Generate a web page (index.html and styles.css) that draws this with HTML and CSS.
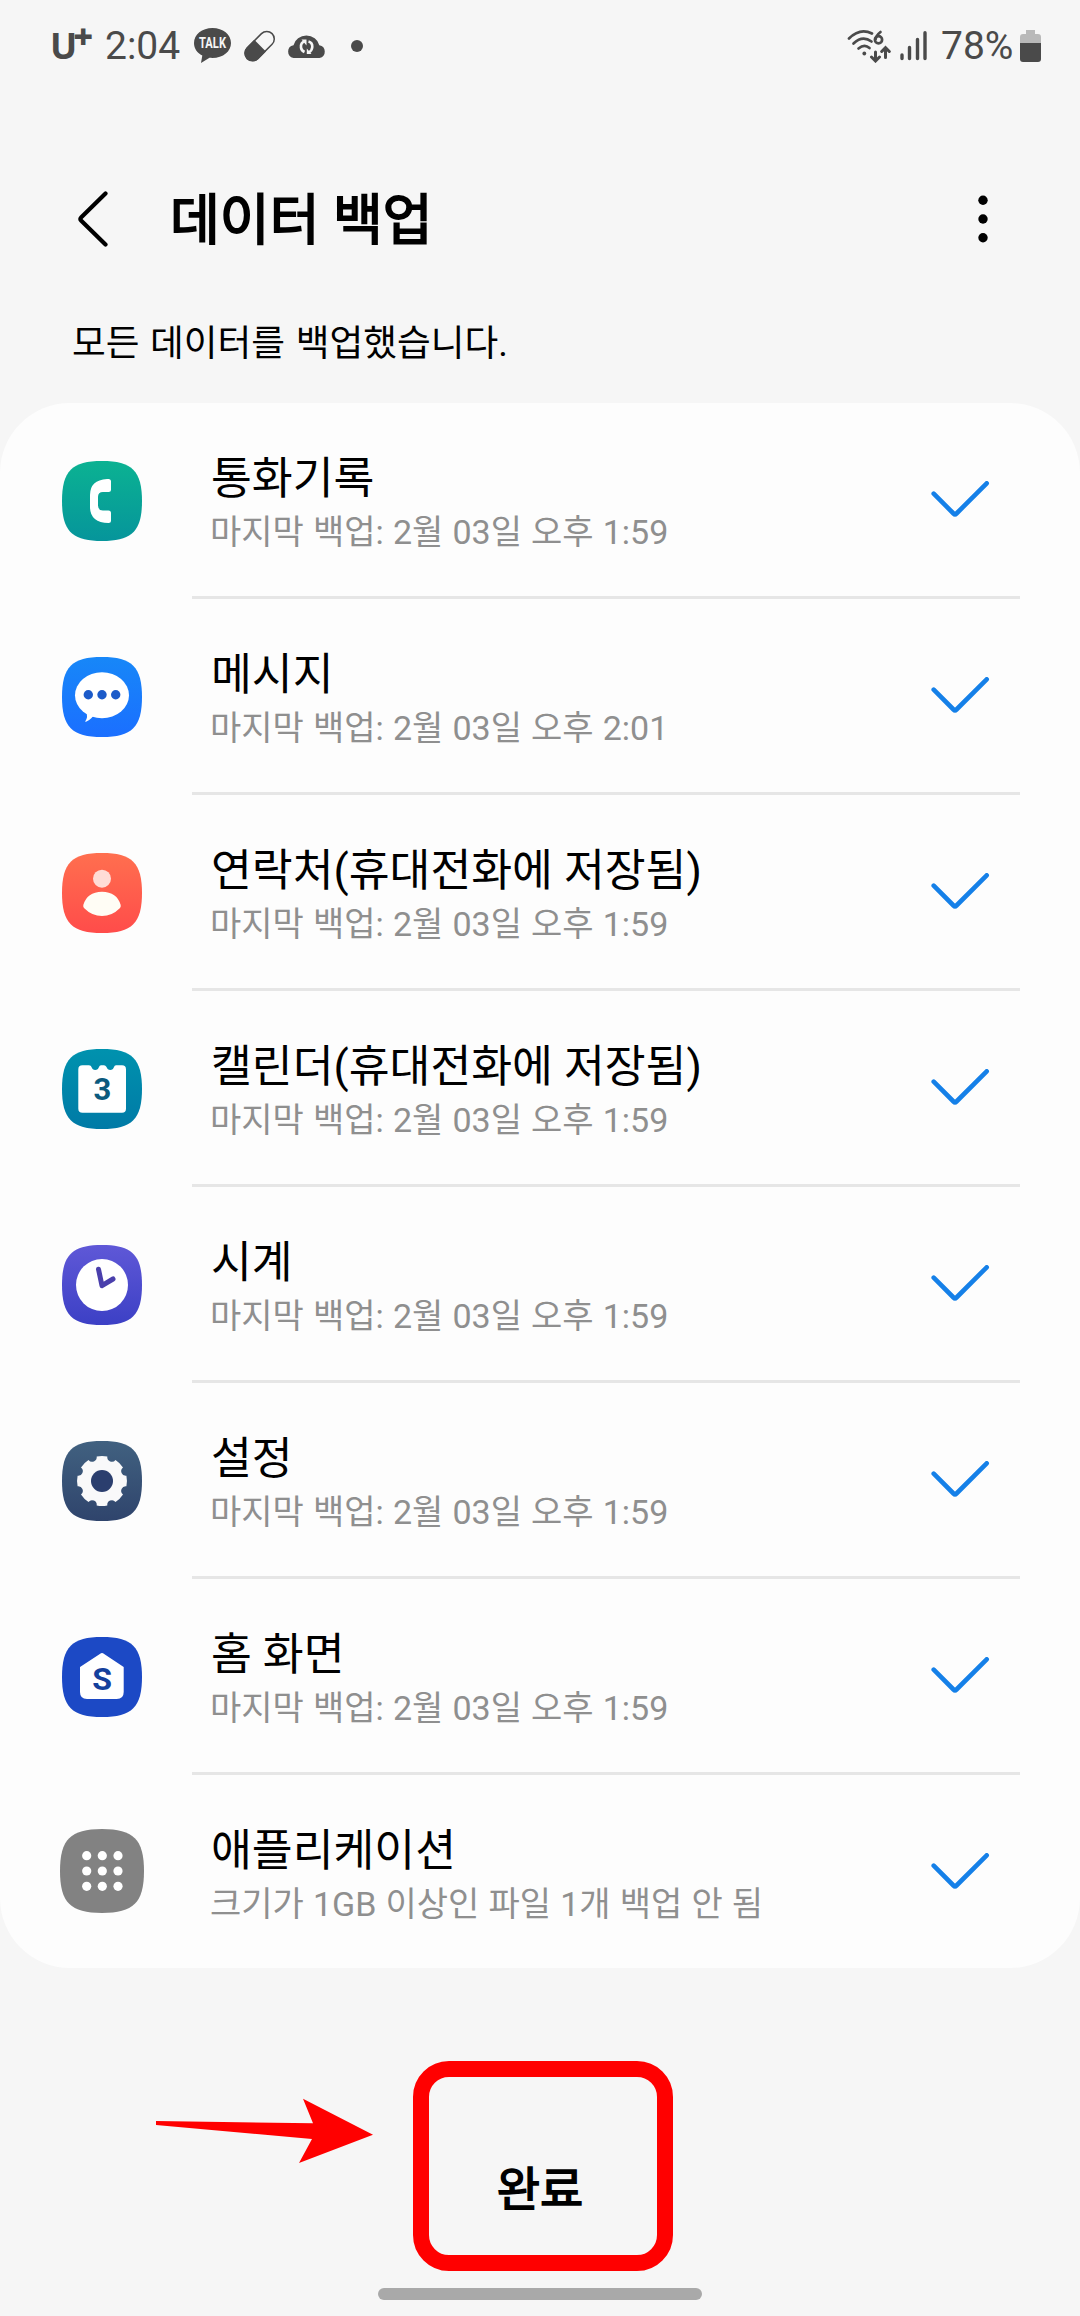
FILE: index.html
```html
<!DOCTYPE html>
<html lang="ko">
<head>
  <meta charset="UTF-8">
  <title>데이터 백업</title>
  <link rel="stylesheet" href="styles.css">
</head>
<body>
  <svg class="defs" width="0" height="0">
    <defs>
      <linearGradient id="g-call" x1="0" y1="0" x2="0" y2="1"><stop offset="0" stop-color="#0bb292"/><stop offset="1" stop-color="#06959b"/></linearGradient>
      <linearGradient id="g-msg" x1="0" y1="0" x2="0" y2="1"><stop offset="0" stop-color="#1787f8"/><stop offset="1" stop-color="#1b6fff"/></linearGradient>
      <linearGradient id="g-contact" x1="0" y1="0" x2="0" y2="1"><stop offset="0" stop-color="#ff6f4f"/><stop offset="1" stop-color="#ff4c4a"/></linearGradient>
      <linearGradient id="g-cal" x1="0" y1="0" x2="0" y2="1"><stop offset="0" stop-color="#0092ae"/><stop offset="1" stop-color="#007aa6"/></linearGradient>
      <linearGradient id="g-clock" x1="0" y1="0" x2="0" y2="1"><stop offset="0" stop-color="#5f58d7"/><stop offset="1" stop-color="#3c40c5"/></linearGradient>
      <linearGradient id="g-set" x1="0" y1="0" x2="0" y2="1"><stop offset="0" stop-color="#416180"/><stop offset="1" stop-color="#2f446c"/></linearGradient>
      <path id="squircle" d="M40 0C70 0 80 10 80 40S70 80 40 80 0 70 0 40 10 0 40 0Z"/>
      <path id="check" d="M2.7 12.7L22.5 32.5Q24 34 25.5 32.5L55.7 2.3" fill="none" stroke="#1580e8" stroke-width="4.6" stroke-linecap="round"/>
    </defs>
  </svg>

  <div class="status-bar">
    <div class="status-left">
      <span class="carrier">U<span class="plus">+</span></span>
      <span class="time">2:04</span>
      <svg class="ic-talk" width="38" height="36" viewBox="194 29 38 36">
        <path d="M212.500 29C202 29 194 35.500 194 44C194 49.500 197.300 54 202.300 56.600L201 64L209.500 58.800C222 60 231 53 231 44C231 35.500 223 29 212.500 29Z" fill="#4a4a4a"/>
        <text x="199" y="49.200" textLength="27" lengthAdjust="spacingAndGlyphs" class="talk-text">TALK</text>
      </svg>
      <svg class="ic-pill" width="34" height="34" viewBox="243 29 34 34">
        <g transform="rotate(45 259.700 46)">
          <rect x="252.200" y="28.500" width="15" height="35" rx="7.500" fill="none" stroke="#4a4a4a" stroke-width="1.500"/>
          <path d="M251.500 45.500H268V56.300A8.200 8.200 0 0 1 251.500 56.300Z" fill="#4a4a4a"/>
        </g>
      </svg>
      <svg class="ic-cloud" width="40" height="26" viewBox="287 34 40 26">
        <path d="M293.500 59A6.500 6.500 0 0 1 293.500 46.200A13.200 12.200 0 0 1 319.300 46.200A6.500 6.500 0 0 1 319.500 59Z" fill="#4a4a4a"/>
        <g fill="none" stroke="#f6f6f6" stroke-width="2.600">
          <path d="M304.500 42.500Q300.500 43.500 301 48.500Q301.300 51.500 304.500 53"/>
          <path d="M308.500 42.500Q312.500 43.500 312.300 48Q312 52 308.500 53.500"/>
        </g>
        <path d="M301.500 40.500H306.500V46.500ZM311.500 55H306.800V49.500Z" fill="#f6f6f6"/>
      </svg>
      <span class="dot"></span>
    </div>
    <div class="status-right">
      <svg class="ic-wifi" width="44" height="34" viewBox="847 29 44 34">
        <g fill="none" stroke="#4a4a4a" stroke-width="2.700" stroke-linecap="round">
          <path d="M849 38.500Q860 27.500 872 33.500"/>
          <path d="M853.500 43.500Q862.500 35 871.500 41.500"/>
          <path d="M858.500 48.500Q864.500 43.500 869.500 48"/>
          <path d="M880.500 32Q876 35.500 875.700 39"/>
          <circle cx="878.500" cy="39.800" r="3.600"/>
          <path d="M875.500 52V60M871.500 57L875.500 61L879.500 57" stroke-width="3"/>
          <path d="M885.500 57.500V49M881.700 51.500L885.500 47.700L889.300 51.500" stroke-width="3"/>
        </g>
        <circle cx="864.300" cy="53.500" r="1.900" fill="#4a4a4a"/>
      </svg>
      <svg class="ic-signal" width="28" height="30" viewBox="900 31 28 30">
        <path d="M902 55V58.500M909.500 47.500V58.500M917.500 39.500V58.500M925 32.800V58.500" stroke="#4a4a4a" stroke-width="3.400" stroke-linecap="round"/>
      </svg>
      <span class="battery-text">78%</span>
      <svg class="ic-battery" width="22" height="32" viewBox="1020 30 22 32">
        <path d="M1026 30H1035V34H1038Q1041 34 1041 37V44H1020V37Q1020 34 1023 34H1026Z" fill="#b9b9b9"/>
        <path d="M1020 43H1041V59Q1041 62 1038 62H1023Q1020 62 1020 59Z" fill="#4a4a4a"/>
      </svg>
    </div>
  </div>

  <div class="header">
    <svg class="back" width="32" height="58" viewBox="77 190 32 58">
      <path d="M105.500 193.500L81.300 217.200Q79.500 219 81.300 220.800L105.500 244.500" fill="none" stroke="#000" stroke-width="4.200" stroke-linecap="round"/>
    </svg>
    <h1>데이터 백업</h1>
    <svg class="more" width="10" height="48" viewBox="978 195 10 48">
      <circle cx="983" cy="200.300" r="4.700"/><circle cx="983" cy="219" r="4.700"/><circle cx="983" cy="237.700" r="4.700"/>
    </svg>
  </div>
  <p class="summary">모든 데이터를 백업했습니다.</p>

  <div class="list">
    <div class="item">
      <svg class="app-icon" viewBox="0 0 80 80">
        <use href="#squircle" fill="url(#g-call)"/>
        <path d="M45 18H46.500Q49 18 49 20.500V28.500Q49 31 46.500 31H41Q36 31 36 36V44.500Q36 49.500 41 49.500H46.500Q49 49.500 49 52V59.500Q49 62 46.500 62Q28 61.500 28 46V34Q28 19 45 18Z" fill="#fff"/>
      </svg>
      <div class="item-body">
        <div class="item-text">
          <div class="item-title">통화기록</div>
          <div class="item-sub">마지막 백업: 2월 03일 오후 1:59</div>
        </div>
        <svg class="check" width="59" height="37"><use href="#check"/></svg>
      </div>
    </div>

    <div class="item">
      <svg class="app-icon" viewBox="0 0 80 80">
        <use href="#squircle" fill="url(#g-msg)"/>
        <ellipse cx="40" cy="38.200" rx="27" ry="23" fill="#fff"/>
        <path d="M24 53Q26.500 60 23 65Q28 63.500 32 58Z" fill="#fff"/>
        <g fill="#1c5bc9"><circle cx="26.300" cy="37.800" r="4.700"/><circle cx="40" cy="37.800" r="4.700"/><circle cx="53.700" cy="37.800" r="4.700"/></g>
      </svg>
      <div class="item-body">
        <div class="item-text">
          <div class="item-title">메시지</div>
          <div class="item-sub">마지막 백업: 2월 03일 오후 2:01</div>
        </div>
        <svg class="check" width="59" height="37"><use href="#check"/></svg>
      </div>
    </div>

    <div class="item">
      <svg class="app-icon" viewBox="0 0 80 80">
        <use href="#squircle" fill="url(#g-contact)"/>
        <circle cx="40" cy="25.700" r="9" fill="#ffdcd6"/>
        <path d="M21.300 52Q25 39 40 38.700Q55 39 58.700 52Q59.200 54 57.500 55.500Q50 63 40 63Q30 63 22.500 55.500Q20.800 54 21.300 52Z" fill="#fffdf5"/>
      </svg>
      <div class="item-body">
        <div class="item-text">
          <div class="item-title">연락처(휴대전화에 저장됨)</div>
          <div class="item-sub">마지막 백업: 2월 03일 오후 1:59</div>
        </div>
        <svg class="check" width="59" height="37"><use href="#check"/></svg>
      </div>
    </div>

    <div class="item">
      <svg class="app-icon" viewBox="0 0 80 80">
        <use href="#squircle" fill="url(#g-cal)"/>
        <path d="M20.500 16.300H27Q29 16.300 29.500 18Q30.500 21 33.200 21Q36 21 37 18Q37.500 16.300 39 16.300H42Q43.500 16.300 44.500 18Q45.500 21 48.300 21Q51 21 52 18Q52.500 16.300 54 16.300H60Q64 16.300 64 20.500V59.500Q64 63.800 60 63.800H20.500Q16.300 63.800 16.300 59.500V20.500Q16.300 16.300 20.500 16.300Z" fill="#fff"/>
        <text x="40.300" y="51.300" class="icon-text cal-text">3</text>
      </svg>
      <div class="item-body">
        <div class="item-text">
          <div class="item-title">캘린더(휴대전화에 저장됨)</div>
          <div class="item-sub">마지막 백업: 2월 03일 오후 1:59</div>
        </div>
        <svg class="check" width="59" height="37"><use href="#check"/></svg>
      </div>
    </div>

    <div class="item">
      <svg class="app-icon" viewBox="0 0 80 80">
        <use href="#squircle" fill="url(#g-clock)"/>
        <circle cx="40" cy="40" r="26" fill="#fff"/>
        <path d="M36.500 24.200L40 40.700L51 34" fill="none" stroke="#4a3fac" stroke-width="5" stroke-linecap="round" stroke-linejoin="round"/>
      </svg>
      <div class="item-body">
        <div class="item-text">
          <div class="item-title">시계</div>
          <div class="item-sub">마지막 백업: 2월 03일 오후 1:59</div>
        </div>
        <svg class="check" width="59" height="37"><use href="#check"/></svg>
      </div>
    </div>

    <div class="item">
      <svg class="app-icon" viewBox="0 0 80 80">
        <use href="#squircle" fill="url(#g-set)"/>
        <path d="M34.700 15.600A25 25 0 0 1 45.300 15.600A4.600 4.600 0 0 0 53.500 19A25 25 0 0 1 61 26.500A4.600 4.600 0 0 0 64.400 34.700A25 25 0 0 1 64.400 45.300A4.600 4.600 0 0 0 61 53.500A25 25 0 0 1 53.500 61A4.600 4.600 0 0 0 45.300 64.400A25 25 0 0 1 34.700 64.400A4.600 4.600 0 0 0 26.500 61A25 25 0 0 1 19 53.500A4.600 4.600 0 0 0 15.600 45.300A25 25 0 0 1 15.600 34.700A4.600 4.600 0 0 0 19 26.500A25 25 0 0 1 26.500 19A4.600 4.600 0 0 0 34.700 15.600Z" fill="#f9f9fa"/>
        <circle cx="40" cy="40" r="11" fill="#2b3e6e"/>
      </svg>
      <div class="item-body">
        <div class="item-text">
          <div class="item-title">설정</div>
          <div class="item-sub">마지막 백업: 2월 03일 오후 1:59</div>
        </div>
        <svg class="check" width="59" height="37"><use href="#check"/></svg>
      </div>
    </div>

    <div class="item">
      <svg class="app-icon" viewBox="0 0 80 80">
        <use href="#squircle" fill="#1c49c5"/>
        <path d="M39 16.300Q40 15.600 41 16.300L61.700 30V55Q61.700 62 54.700 62H25Q18 62 18 55V30Z" fill="#fff"/>
        <text x="40" y="53.300" class="icon-text home-text">S</text>
      </svg>
      <div class="item-body">
        <div class="item-text">
          <div class="item-title">홈 화면</div>
          <div class="item-sub">마지막 백업: 2월 03일 오후 1:59</div>
        </div>
        <svg class="check" width="59" height="37"><use href="#check"/></svg>
      </div>
    </div>

    <div class="item">
      <svg class="app-icon large" viewBox="0 0 84 84">
        <use href="#squircle" transform="scale(1.05)" fill="#828282"/>
        <g fill="#fff">
          <circle cx="26.700" cy="26.700" r="4.600"/><circle cx="42.300" cy="26.700" r="4.600"/><circle cx="58" cy="26.700" r="4.600"/>
          <circle cx="26.700" cy="42" r="4.600"/><circle cx="42.300" cy="42" r="4.600"/><circle cx="58" cy="42" r="4.600"/>
          <circle cx="26.700" cy="57.300" r="4.600"/><circle cx="42.300" cy="57.300" r="4.600"/><circle cx="58" cy="57.300" r="4.600"/>
        </g>
      </svg>
      <div class="item-body">
        <div class="item-text">
          <div class="item-title">애플리케이션</div>
          <div class="item-sub">크기가 1GB 이상인 파일 1개 백업 안 됨</div>
        </div>
        <svg class="check" width="59" height="37"><use href="#check"/></svg>
      </div>
    </div>
  </div>

  <div class="footer">
    <button class="done-btn">완료</button>
    <div class="nav-handle"></div>
  </div>

  <!-- 설명용 표시 -->
  <svg class="arrow" width="220" height="66" viewBox="154 2098 220 66">
    <path d="M156 2121L313 2123.300L303 2098.700L373 2134.700L299 2163L312 2139L156 2125Z" fill="#f00"/>
  </svg>
  <div class="highlight"></div>
</body>
</html>
```

FILE: styles.css
```css
* {
  box-sizing: border-box;
}

body {
  margin: 0;
  width: 1080px;
  height: 2316px;
  position: relative;
  overflow: hidden;
  display: flex;
  flex-direction: column;
  background-color: #f6f6f6;
  color: #000;
  font-family: Roboto, "Noto Sans CJK KR", sans-serif;
}

svg {
  display: block;
  flex-shrink: 0;
}

.defs {
  position: absolute;
}

/* 상태 표시줄 */
.status-bar {
  height: 92px;
  display: flex;
  justify-content: space-between;
  align-items: center;
  padding: 0 38px 0 50px;
  color: #4a4a4a;
}

.status-left,
.status-right {
  display: flex;
  align-items: center;
}

.carrier {
  width: 55px;
  display: flex;
  font-family: "Open Sans", sans-serif;
  font-size: 36px;
  font-weight: 700;
  line-height: 50px;
}

.plus {
  font-size: 34px;
  font-weight: 800;
  line-height: 31px;
  margin-left: -4px;
}

.time {
  width: 89px;
  font-size: 39px;
  line-height: 48px;
}

.ic-pill {
  margin-left: 11px;
}

.ic-cloud {
  margin-left: 10px;
}

.talk-text {
  font-family: Roboto, sans-serif;
  font-size: 14px;
  font-weight: 700;
  fill: #f6f6f6;
}

.dot {
  width: 12px;
  height: 12px;
  margin-left: 24px;
  border-radius: 50%;
  background-color: #4a4a4a;
}

.ic-signal {
  margin-left: 9px;
}

.battery-text {
  width: 79px;
  margin-left: 13px;
  font-size: 39px;
  line-height: 48px;
}

/* 제목 */
.header {
  height: 254px;
  padding: 0 92px 0 77px;
  display: flex;
  align-items: center;
}

.header h1 {
  flex: 1;
  margin: 4px 0 0 61px;
  font-size: 54.2px;
  font-weight: 400;
  line-height: 80px;
  -webkit-text-stroke: 1.8px #000;
}

.summary {
  height: 57px;
  margin: -34px 0 34px 72px;
  font-size: 36.7px;
  line-height: 64px;
  word-spacing: 1.5px;
}

/* 백업 목록 */
.list {
  height: 1565px;
  background-color: #fdfdfd;
  border-radius: 70px;
}

.item {
  display: flex;
  height: 196px;
  padding: 0 60px 0 62px;
}

.app-icon {
  width: 80px;
  height: 80px;
  margin: 58px 50px 0 0;
}

.app-icon.large {
  width: 84px;
  height: 84px;
  margin: 54px 48px 0 -2px;
}

.item-body {
  flex: 1;
  display: flex;
  justify-content: space-between;
  border-bottom: 3px solid #e6e6e6;
  padding: 0 30px 0 18px;
}

.item:last-child .item-body {
  border-bottom: none;
}

.item-text {
  padding-top: 46px;
  white-space: nowrap;
}

.item-title {
  padding-left: 1px;
  font-size: 44.4px;
  line-height: 60px;
}

.item-sub {
  font-size: 34px;
  line-height: 46px;
  word-spacing: 0.7px;
  color: #8f8f8f;
}

.check {
  margin-top: 78px;
}

.icon-text {
  font-family: Roboto, sans-serif;
  font-weight: 700;
  text-anchor: middle;
}

.cal-text {
  font-size: 31px;
  fill: #0b5a7e;
}

.home-text {
  font-size: 32px;
  fill: #15409c;
}

/* 하단 */
.footer {
  flex: 1;
  display: flex;
  flex-direction: column;
  align-items: center;
  justify-content: flex-end;
  padding-bottom: 16px;
}

.done-btn {
  margin-bottom: 65px;
  padding: 0;
  border: none;
  background: none;
  color: #000;
  font-family: inherit;
  font-size: 47px;
  font-weight: 400;
  line-height: 66px;
  -webkit-text-stroke: 1.5px #000;
}

.nav-handle {
  width: 324px;
  height: 12px;
  border-radius: 6px;
  background-color: #a9a9a9;
}

.arrow {
  position: absolute;
  left: 154px;
  top: 2098px;
}

.highlight {
  position: absolute;
  left: 413px;
  top: 2061px;
  width: 260px;
  height: 210px;
  border: 16px solid #f00;
  border-radius: 36px;
}
```
